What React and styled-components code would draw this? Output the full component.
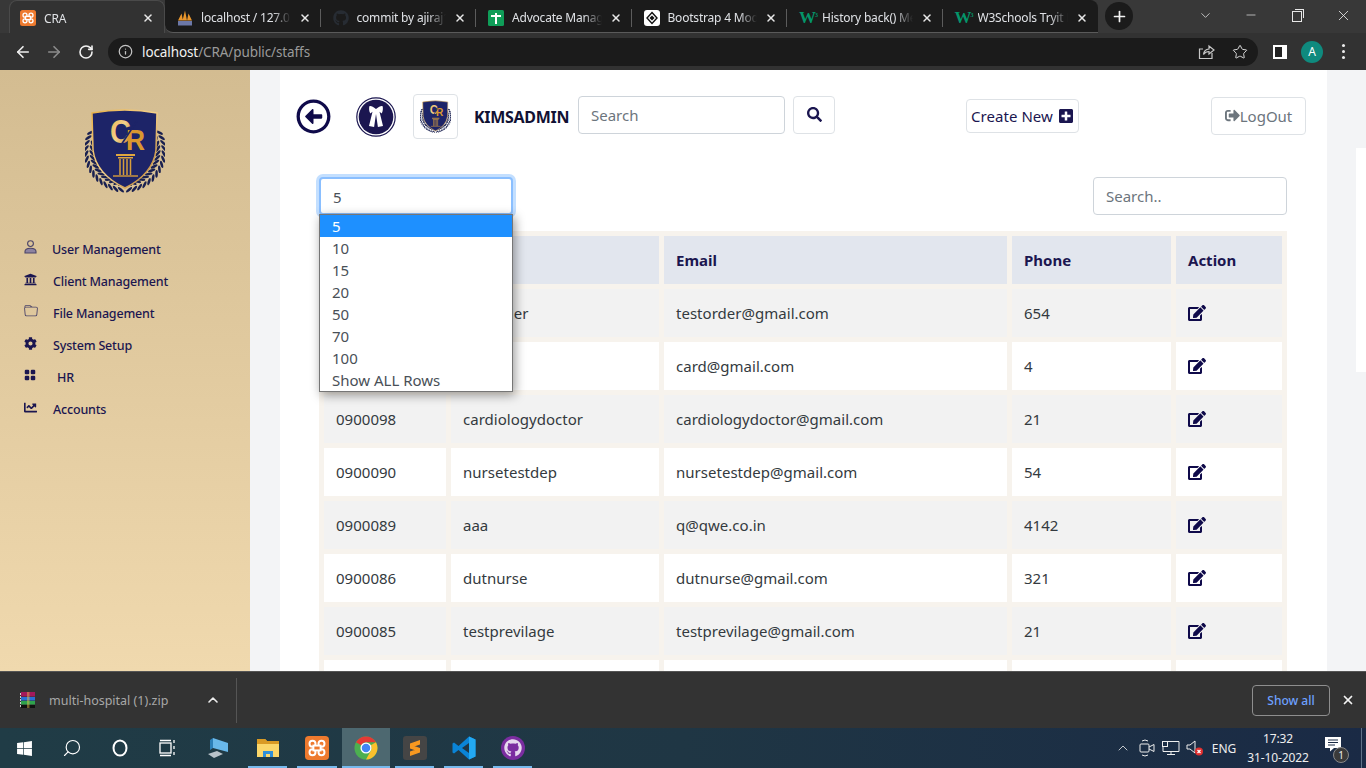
import React from 'react'
import styled, { createGlobalStyle } from 'styled-components'
import { ArrowLeft, ArrowRight, RotateCw, Info, Star, X, Plus, ChevronDown, ChevronUp, Minus, Search } from 'lucide-react'
import { FaRegArrowAltCircleLeft, FaSearch, FaPlusSquare, FaEdit, FaSignOutAlt, FaCog, FaUniversity, FaChartLine, FaWindows, FaGithub } from 'react-icons/fa'
import { BsFolder, BsGridFill } from 'react-icons/bs'

const UI_FONT = '"Noto Sans", "Open Sans", sans-serif'
const NAVY = '#1b1650'

const Global = createGlobalStyle`
  html, body { margin: 0; padding: 0; height: 100%; overflow: hidden; }
  body { font-family: ${UI_FONT}; background: #f3f4f6; }
  * { box-sizing: border-box; }
`

const Screen = styled.div`
  width: 1366px;
  height: 768px;
  display: flex;
  flex-direction: column;
  overflow: hidden;
`

/* browser tabs */
const TabStrip = styled.div`
  height: 33px;
  background: #383838;
  display: flex;
  align-items: flex-end;
  padding-left: 9px;
  flex: none;
`
const TabBox = styled.div`
  position: relative;
  width: ${p => p.$w || 155.5}px;
  height: 33px;
  display: flex;
  align-items: center;
  padding: 2px 10px 0 ${p => p.$active ? 10 : 12}px;
  gap: 8px;
  color: #dfe1e5;
  font-size: 12px;
  background: ${p => p.$active ? '#323232' : '#1b1b1b'};
  border-radius: ${p => p.$active ? '8px 8px 0 0' : p.$first ? '0 0 0 8px' : p.$last ? '0 8px 0 0' : '0'};
  border-top: 1px solid ${p => p.$active ? '#4a4a4a' : '#1b1b1b'};
  border-left: ${p => p.$active ? '1px solid #4a4a4a' : 'none'};
  border-right: ${p => p.$active ? '1px solid #4a4a4a' : 'none'};
  border-bottom: ${p => p.$active ? 'none' : '1px solid #5a5a5a'};
  &::after {
    content: '';
    display: ${p => p.$sep ? 'block' : 'none'};
    position: absolute;
    right: 0;
    top: 8px;
    height: 18px;
    width: 1px;
    background: #5c5c5c;
  }
`
const TabTitle = styled.span`
  flex: 1;
  white-space: nowrap;
  overflow: hidden;
  letter-spacing: -0.2px;
  mask-image: linear-gradient(to right, #000 80%, transparent 100%);
`
const TabClose = styled(X)`
  flex: none;
  width: 12px;
  height: 12px;
  color: #e8e8e8;
  stroke-width: 3;
`
const NewTab = styled.div`
  width: 28px;
  height: 28px;
  border-radius: 50%;
  background: #1b1b1b;
  color: #f2f2f2;
  display: flex;
  align-items: center;
  justify-content: center;
  margin: 0 0 1px 7px;
  align-self: center;
`
const WinControls = styled.div`
  margin-left: auto;
  display: flex;
  align-items: center;
  align-self: flex-start;
  height: 30px;
  color: #e8e8e8;
`
const WinButton = styled.div`
  width: 46px;
  display: flex;
  justify-content: center;
`
const RestoreGlyph = styled.div`
  position: relative;
  width: 10px;
  height: 11px;
  border: 1px solid #e8e8e8;
  margin-top: 2px;
  &::before {
    content: '';
    position: absolute;
    top: -3px;
    right: -3px;
    width: 8px;
    height: 8px;
    border-top: 1px solid #e8e8e8;
    border-right: 1px solid #e8e8e8;
  }
`

/* address bar */
const Toolbar = styled.div`
  height: 37px;
  background: #323232;
  display: flex;
  align-items: center;
  padding-left: 14px;
  color: #eee;
  flex: none;
`
const NavIcon = styled.div`
  width: ${p => p.$w || 32}px;
  display: flex;
  justify-content: ${p => p.$left ? 'flex-start' : 'center'};
  color: ${p => p.$dim ? '#8c8c8c' : '#f1f1f1'};
`
const Omnibox = styled.div`
  width: 1150px;
  height: 28px;
  margin-left: 6px;
  border-radius: 14px;
  background: #1b1b1b;
  display: flex;
  align-items: center;
  padding: 0 8px 0 10px;
  font-size: 13.5px;
  letter-spacing: -0.1px;
  color: #9a9a9a;
`
const UrlHost = styled.span`
  color: #f2f2f2;
  margin-left: 9px;
`
const OmniRight = styled.div`
  margin-left: auto;
  display: flex;
  align-items: center;
  gap: 17px;
  color: #c8c8c8;
  padding-right: 2px;
`
const PanelGlyph = styled.div`
  width: 14px;
  height: 14px;
  margin-left: 15px;
  border: 2px solid #fff;
  border-right-width: 5px;
  background: #222;
  flex: none;
`
const Avatar = styled.div`
  width: 22px;
  height: 22px;
  border-radius: 50%;
  background: #0f8a7e;
  color: #fff;
  font-size: 12px;
  margin-left: 14px;
  display: flex;
  align-items: center;
  justify-content: center;
  flex: none;
`
const Kebab = styled.div`
  margin-left: 19px;
  width: 3px;
  height: 3px;
  border-radius: 50%;
  background: #eee;
  box-shadow: 0 -6px 0 #eee, 0 6px 0 #eee;
`

/* page */
const Viewport = styled.div`
  flex: 1;
  min-height: 0;
  display: flex;
  overflow: hidden;
  background: #f3f4f6;
`
const Sidebar = styled.aside`
  width: 250px;
  flex: none;
  background: linear-gradient(180deg, #d3bc91 0%, #f0d9ae 100%);
  padding-top: 38px;
`
const LogoWrap = styled.div`
  display: flex;
  justify-content: center;
  margin-bottom: 39px;
`
const Menu = styled.nav`
  display: flex;
  flex-direction: column;
`
const MenuItem = styled.a`
  height: 32px;
  display: flex;
  align-items: center;
  padding-left: 24px;
  color: ${NAVY};
  font-size: 12.5px;
  font-weight: 500;
  letter-spacing: -0.17px;
`
const MenuIcon = styled.span`
  width: ${p => p.$w || 29}px;
  display: flex;
  align-items: center;
  margin-top: -4px;
  color: ${p => p.$soft ? '#4b4468' : NAVY};
  font-size: 13px;
  flex: none;
`
const Gutter = styled.div`
  width: 30px;
  flex: none;
`
const Main = styled.main`
  width: 1047px;
  flex: none;
  background: #fff;
  overflow: hidden;
`
const RightRail = styled.div`
  flex: 1;
  display: flex;
  justify-content: flex-end;
  align-items: flex-start;
  padding-top: 78px;
`
const RailStrip = styled.div`
  width: 10px;
  height: 224px;
  background: #fff;
`
const TopRow = styled.div`
  display: flex;
  align-items: center;
  height: 45px;
  margin-top: 24px;
  padding-left: 16px;
`
const BackIcon = styled(FaRegArrowAltCircleLeft)`
  color: #0f0a4a;
  font-size: 35px;
  flex: none;
`
const LogoBox = styled.div`
  width: 45px;
  height: 45px;
  margin-left: 17px;
  border: 1px solid #dee2e6;
  border-radius: 4px;
  display: flex;
  align-items: center;
  justify-content: center;
  flex: none;
`
const Brand = styled.div`
  margin-left: 16px;
  font-size: 16px;
  font-weight: 700;
  color: #111133;
  width: 104px;
  letter-spacing: -0.3px;
  flex: none;
`
const Field = styled.div`
  width: ${p => p.$w}px;
  height: 38px;
  margin-bottom: ${p => p.$lift || 0}px;
  border: 1px solid #ced4da;
  border-radius: 4px;
  background: #fff;
  color: #6c757d;
  font-size: 15px;
  padding-left: 12px;
  display: flex;
  align-items: center;
  flex: none;
`
const SearchBtn = styled.div`
  width: 42px;
  height: 38px;
  margin: 0 0 4px 8px;
  border: 1px solid #dee2e6;
  border-radius: 4px;
  display: flex;
  align-items: center;
  justify-content: center;
  color: ${NAVY};
  font-size: 15px;
  flex: none;
`
const CreateBtn = styled.div`
  width: 113px;
  height: 34px;
  margin: 0 0 2px 131px;
  border: 1px solid #dee2e6;
  border-radius: 4px;
  display: flex;
  align-items: center;
  justify-content: center;
  gap: 5px;
  color: ${NAVY};
  font-size: 15px;
  letter-spacing: 0.05px;
  flex: none;
`
const LogoutBtn = styled.div`
  width: 95px;
  height: 38px;
  margin: 0 0 2px 132px;
  border: 1px solid #dee2e6;
  border-radius: 4px;
  display: flex;
  align-items: center;
  justify-content: center;
  color: #6c757d;
  font-size: 15px;
  flex: none;
`
const FilterRow = styled.div`
  display: flex;
  justify-content: space-between;
  margin-top: 38px;
  padding: 0 40px 0 39px;
  height: 38px;
`
const SelectWrap = styled.div`
  position: relative;
  width: 194px;
`
const SelectBox = styled.div`
  height: 38px;
  border: 2px solid #8abfff;
  border-radius: 4px;
  box-shadow: 0 0 0 3px #c3dfff;
  background: #fff;
  color: #495057;
  font-size: 15px;
  padding: 1px 0 0 12px;
  display: flex;
  align-items: center;
`
const OptionList = styled.div`
  position: absolute;
  z-index: 5;
  top: 37px;
  left: 0;
  width: 194px;
  background: #fff;
  border: 1px solid #767676;
  box-shadow: 2px 3px 10px rgba(0, 0, 0, 0.4);
`
const Option = styled.div`
  height: 22px;
  line-height: 23px;
  padding-left: 12px;
  font-size: 15px;
  color: ${p => p.$on ? '#fff' : '#495057'};
  background: ${p => p.$on ? '#1e90ff' : '#fff'};
`
const Table = styled.table`
  margin: 16px 0 0 39px;
  width: 968px;
  table-layout: fixed;
  border-collapse: separate;
  border-spacing: 5px;
  background: #f7f3ed;
`
const HeadCell = styled.th`
  height: 48px;
  padding: 0 12px;
  background: #e2e6ee;
  color: ${NAVY};
  font-size: 15px;
  font-weight: 700;
  text-align: left;
`
const Cell = styled.td`
  height: 48px;
  padding: 0 12px;
  color: #343a40;
  font-size: 15px;
  letter-spacing: 0.02px;
  background: ${p => p.$odd ? '#f2f2f2' : '#fff'};
  white-space: nowrap;
`
const EditIcon = styled(FaEdit)`
  color: #0f0a4a;
  font-size: 18px;
  display: block;
`

/* download shelf */
const Shelf = styled.div`
  height: 57px;
  flex: none;
  background: #333;
  border-top: 1px solid #555;
  display: flex;
  align-items: center;
  padding-left: 20px;
  color: #a8a8a8;
  font-size: 12.5px;
`
const ShelfName = styled.span`
  margin-left: 13px;
  width: 156px;
`
const ShelfDivider = styled.div`
  width: 1px;
  height: 45px;
  background: #555;
  margin-left: 15px;
`
const ShowAll = styled.div`
  margin-left: auto;
  width: 78px;
  height: 31px;
  border: 1px solid #8e8e8e;
  border-radius: 4px;
  color: #6ea1ff;
  font-size: 12px;
  font-weight: 500;
  display: flex;
  align-items: center;
  justify-content: center;
`
const ShelfClose = styled(X)`
  width: 14px;
  height: 14px;
  margin: 0 11px 0 11px;
  color: #f4f4f4;
  stroke-width: 3;
`

/* windows taskbar */
const Taskbar = styled.div`
  height: 40px;
  flex: none;
  background: linear-gradient(90deg, #203c46 0%, #1f3644 50%, #1a2a45 100%);
  display: flex;
  align-items: stretch;
  color: #fff;
`
const TaskSlot = styled.div`
  position: relative;
  width: ${p => p.$w || 48}px;
  display: flex;
  align-items: center;
  justify-content: center;
  background: ${p => p.$active ? '#4d6870' : 'transparent'};
  flex: none;
  &::after {
    content: '';
    display: ${p => p.$open ? 'block' : 'none'};
    position: absolute;
    left: ${p => p.$active ? 0 : 5}px;
    right: ${p => p.$active ? 0 : 5}px;
    bottom: 0;
    height: 2px;
    background: #76b9ed;
  }
`
const Tray = styled.div`
  margin-left: auto;
  display: flex;
  align-items: center;
  font-size: 12px;
  color: #eee;
`
const TrayItem = styled.div`
  width: ${p => p.$w}px;
  display: flex;
  justify-content: center;
  align-items: center;
  flex: none;
`
const Clock = styled.div`
  width: 74px;
  text-align: center;
  line-height: 19px;
  font-size: 12px;
  letter-spacing: -0.1px;
  flex: none;
`
const Notify = styled.div`
  position: relative;
  width: 36px;
  height: 100%;
  display: flex;
  align-items: center;
  justify-content: center;
  padding-bottom: 8px;
  flex: none;
`
const NotifyBadge = styled.div`
  position: absolute;
  right: 2px;
  bottom: 5px;
  width: 16px;
  height: 16px;
  border-radius: 50%;
  background: #3a3a3a;
  border: 1px solid #888;
  font-size: 10px;
  display: flex;
  align-items: center;
  justify-content: center;
`
const DesktopEdge = styled.div`
  width: 15px;
  height: 100%;
  flex: none;
  &::after {
    content: '';
    display: block;
    margin-left: 10px;
    width: 1px;
    height: 100%;
    background: #5f7288;
  }
`
const GithubDisc = styled.div`
  width: 24px;
  height: 24px;
  border-radius: 50%;
  background: #7b2da0;
  display: flex;
  align-items: center;
  justify-content: center;
  color: #e6d8ee;
  font-size: 18px;
`

let logoId = 0
function Logo({ size = 80 }) {
  const gid = 'gold' + (logoId++)
  const leaves = []
  for (let i = 0; i < 15; i++) {
    const phi = (-28 + i * 8) * Math.PI / 180
    const deg = -28 + i * 8
    ;[33, 39].forEach((R, k) => {
      const lx = 40 - R * Math.cos(phi)
      const ly = 43 + R * Math.sin(phi)
      const tilt = 90 - deg + (k ? 35 : -35)
      const id = i + '-' + k
      leaves.push(<ellipse key={'l' + id} cx={lx} cy={ly} rx="3.8" ry="1.3" fill="#1a2150" transform={`rotate(${tilt} ${lx} ${ly})`} />)
      leaves.push(<ellipse key={'r' + id} cx={80 - lx} cy={ly} rx="3.8" ry="1.3" fill="#1a2150" transform={`rotate(${-tilt} ${80 - lx} ${ly})`} />)
    })
  }
  return (
    <svg width={size} height={size * 86 / 80} viewBox="0 0 80 86">
      <defs>
        <linearGradient id={gid} x1="0" y1="0" x2="1" y2="1">
          <stop offset="0" stopColor="#e8b24a" />
          <stop offset="0.5" stopColor="#f4d08a" />
          <stop offset="1" stopColor="#b97a22" />
        </linearGradient>
      </defs>
      {leaves}
      <path d="M7 5 Q40 -1 72 5 L71 42 Q68 66 40 80 Q11 66 8 42 Z" fill="#1d2468" stroke={`url(#${gid})`} strokeWidth="1.5" />
      <text x="25" y="35" fontFamily="Liberation Sans, sans-serif" fontWeight="700" fontSize="34" textLength="21" lengthAdjust="spacingAndGlyphs" fill={`url(#${gid})`}>C</text>
      <text x="41" y="42" fontFamily="Liberation Sans, sans-serif" fontWeight="700" fontSize="30" textLength="19" lengthAdjust="spacingAndGlyphs" fill="#d9982f">R</text>
      <path d="M30 46 L52 13" stroke="#1d2468" strokeWidth="1.6" />
      <rect x="31" y="46" width="19" height="2" fill="#e0a63f" />
      <rect x="33" y="49" width="15" height="1.5" fill="#e0a63f" />
      <path d="M35 51 V67 M38.5 51 V67 M42 51 V67 M45.5 51 V67" stroke="#d89e3b" strokeWidth="1.5" />
      <path d="M28 68 H53" stroke="#d89e3b" strokeWidth="1.4" />
    </svg>
  )
}

const AdvocateIcon = () => (
  <svg width="40" height="40" viewBox="0 0 40 40" style={{ flexShrink: 0, marginLeft: 25 }}>
    <circle cx="20" cy="20" r="19.2" fill="#fff" stroke={NAVY} strokeWidth="1.2" />
    <circle cx="20" cy="20" r="17.3" fill={NAVY} />
    <path d="M20 12 C17 9.5 15 8.5 13.5 9 C12.7 11 13.1 14.5 14.3 16.5 L16.5 14.8 L13 29 L18.1 30 L20 17 L21.9 30 L27 29 L23.5 14.8 L25.7 16.5 C26.9 14.5 27.3 11 26.5 9 C25 8.5 23 9.5 20 12 Z" fill="#fff" />
  </svg>
)

const XamppIcon = ({ size = 16 }) => (
  <svg width={size} height={size} viewBox="0 0 16 16" style={{ flexShrink: 0 }}>
    <rect width="16" height="16" rx="2.5" fill="#ee7a2e" />
    <g fill="none" stroke="#fff" strokeWidth="1.3">
      <circle cx="5" cy="5.2" r="2" />
      <circle cx="11" cy="5.2" r="2" />
      <circle cx="5" cy="10.8" r="2" />
      <circle cx="11" cy="10.8" r="2" />
      <rect x="5.6" y="6.4" width="4.8" height="3.2" fill="#ee7a2e" />
    </g>
  </svg>
)
const PmaIcon = () => (
  <svg width="16" height="16" viewBox="0 0 16 16" style={{ flexShrink: 0 }}>
    <path d="M1 10.5 L4.5 3.5 L6 10.5 Z M5.5 10.5 L8 0.5 L10 10.5 Z M10 10.5 L11.5 3.5 L15 10.5 Z" fill="#e9962c" />
    <rect x="1" y="11" width="14" height="4.5" fill="#6c78a8" />
  </svg>
)
const SheetIcon = () => (
  <svg width="16" height="16" viewBox="0 0 16 16" style={{ flexShrink: 0 }}>
    <rect width="16" height="16" rx="1.5" fill="#0f9d58" />
    <path d="M3 6 H13 M8 3 V14" stroke="#fff" strokeWidth="2" />
  </svg>
)
const BootIcon = () => (
  <svg width="16" height="16" viewBox="0 0 16 16" style={{ flexShrink: 0 }}>
    <rect width="16" height="16" rx="3" fill="#fff" />
    <path d="M8 2.5 L13 8 L8 13.5 L3 8 Z" fill="none" stroke="#111" strokeWidth="1.4" />
    <path d="M8 5.5 L10.5 8 L8 10.5 L5.5 8 Z" fill="#111" />
  </svg>
)
const W3Mark = styled.span`
  flex: none;
  width: 15px;
  color: #04956a;
  font-family: "Liberation Serif", serif;
  font-weight: 700;
  font-size: 17px;
  line-height: 16px;
  letter-spacing: -1px;
  & > sup { font-size: 6px; vertical-align: 6px; line-height: 0; }
`
const W3Icon = () => <W3Mark>W<sup>3</sup></W3Mark>

const ShareIcon = () => (
  <svg width="17" height="17" viewBox="0 0 17 17" fill="none" stroke="#c8c8c8" strokeWidth="1.2">
    <path d="M14 10 V15.5 H1.5 V6 H5" />
    <path d="M5.5 11.5 Q6 6.5 11 6 V3 L16 7 L11 11 V8.5 Q7.5 8.5 5.5 11.5 Z" />
  </svg>
)
const RarIcon = () => (
  <svg width="16" height="16" viewBox="0 0 16 16" style={{ flexShrink: 0 }}>
    <rect x="1" y="0" width="14" height="4.5" fill="#a3195b" />
    <rect x="1" y="5" width="14" height="3.5" fill="#2a6fd6" />
    <rect x="1" y="9" width="14" height="3.5" fill="#2ea24c" />
    <rect x="1" y="13" width="14" height="3" fill="#111" />
    <path d="M1 2 H0 M1 5 H0 M1 8 H0 M1 11 H0 M1 14 H0" stroke="#fff" strokeWidth="1.4" />
    <rect x="7" y="0" width="2.5" height="16" fill="#e8c34a" opacity="0.45" />
  </svg>
)
const PersonIcon = () => (
  <svg width="13" height="14" viewBox="0 0 13 14" fill="none" stroke="#4b4468" strokeWidth="1.1">
    <circle cx="6.5" cy="3.6" r="2.9" />
    <path d="M1 13 V11.5 Q1 8.2 6.5 8.2 Q12 8.2 12 11.5 V13 Z" fill="#8d83a0" />
  </svg>
)
const SearchGlyph = () => <Search size={20} strokeWidth={1.4} color="#fff" style={{ transform: 'scaleX(-1)' }} />
const TaskViewIcon = () => (
  <svg width="18" height="18" viewBox="0 0 18 18" fill="none" stroke="#fff" strokeWidth="1.3">
    <rect x="1" y="4" width="11" height="10" />
    <path d="M1 1.5 H12 M1 16.5 H12 M15 1 V4 M15 7 V10 M15 13 V16" />
  </svg>
)
const ThisPcIcon = () => (
  <svg width="22" height="22" viewBox="0 0 22 22">
    <path d="M6 1 L21 6 V15 L6 11 Z" fill="#69b8ea" />
    <path d="M6 1 L3 3 V13 L6 11 Z" fill="#2c7fb8" />
    <path d="M1 17 L10 14 L16 17 L7 21 Z" fill="#b9c2c9" />
  </svg>
)
const FolderIcon = () => (
  <svg width="22" height="18" viewBox="0 0 22 18">
    <path d="M0 0 H8 L10 2 H22 V18 H0 Z" fill="#f2c14e" />
    <path d="M0 0 H8 L10 2 H22 V5 H0 Z" fill="#d99a24" />
    <path d="M0 5 H22 V18 H0 Z" fill="#fbd76a" />
    <path d="M6 18 V12 H16 V18 H13 V15 H9 V18 Z" fill="#2f8fd8" />
  </svg>
)
const ChromeIcon = () => (
  <svg width="24" height="24" viewBox="0 0 26 26">
    <circle cx="13" cy="13" r="12.5" fill="#4caf50" />
    <path d="M13 0.5 A12.5 12.5 0 0 1 23.8 6.8 H13 A6 6 0 0 0 7.8 10 L2.2 6.8 A12.5 12.5 0 0 1 13 0.5 Z" fill="#e53935" />
    <path d="M23.8 6.8 A12.5 12.5 0 0 1 13 25.5 L18.2 16 A6 6 0 0 0 18.2 10 Z" fill="#fbc02d" />
    <circle cx="13" cy="13" r="6" fill="#fff" />
    <circle cx="13" cy="13" r="4.6" fill="#4285f4" />
  </svg>
)
const SublimeIcon = () => (
  <svg width="24" height="24" viewBox="0 0 24 24">
    <rect width="24" height="24" rx="3" fill="#454545" />
    <path d="M7 7.5 L17 4 V8.5 L7 12 Z M7 15.5 L17 12 V16.5 L7 20 Z M7 8.5 L17 12 V16 L7 12.5 Z" fill="#f89820" />
  </svg>
)
const VsCodeIcon = () => (
  <svg width="24" height="24" viewBox="0 0 24 24">
    <path d="M17 0.5 L23.5 3.5 V20.5 L17 23.5 L6.5 14 L2 17.5 L0.5 16.5 V7.5 L2 6.5 L6.5 10 Z" fill="#0a84d6" />
    <path d="M17 7 L10 12 L17 17 Z" fill="#1f3644" />
    <path d="M17 0.5 L23.5 3.5 V20.5 L17 23.5 Z" fill="#23a9f2" />
  </svg>
)
const MeetIcon = () => (
  <svg width="16" height="20" viewBox="0 0 16 20" fill="none" stroke="#eee" strokeWidth="1">
    <rect x="1" y="6" width="9" height="8" rx="1" />
    <path d="M10 9 L15 6.5 V13.5 L10 11" />
    <path d="M3 3 Q6 1 9 3 M3 17 Q6 19 9 17" />
  </svg>
)
const NetworkIcon = () => (
  <svg width="18" height="16" viewBox="0 0 18 16" fill="none" stroke="#eee" strokeWidth="1">
    <path d="M5 1.5 H17 V11.5 H1 V7" />
    <path d="M9 11.5 V14.5 M5 14.5 H13" />
    <rect x="0.5" y="1.5" width="5" height="5" />
  </svg>
)
const VolumeIcon = () => (
  <svg width="18" height="18" viewBox="0 0 18 18">
    <path d="M1 6 H4 L9 2 V14 L4 10 H1 Z" fill="none" stroke="#eee" />
    <circle cx="13" cy="12.5" r="4" fill="#e02f2f" />
    <path d="M11.5 11 L14.5 14 M14.5 11 L11.5 14" stroke="#fff" strokeWidth="1.2" />
  </svg>
)
const ChatIcon = () => (
  <svg width="16" height="15" viewBox="0 0 16 15">
    <path d="M0 0 H16 V11 H9 L5 14.5 V11 H0 Z" fill="#fff" />
    <path d="M3 3 H13 M3 5.5 H13 M3 8 H10" stroke="#1a2a45" />
  </svg>
)

const tabs = [
  { title: 'localhost / 127.0.0.1', icon: <PmaIcon />, sep: true, first: true },
  { title: 'commit by ajiraj1', icon: <FaGithub size={16} color="#272c33" style={{ flexShrink: 0 }} />, sep: true },
  { title: 'Advocate Management', icon: <SheetIcon />, sep: true },
  { title: 'Bootstrap 4 Modals', icon: <BootIcon />, sep: true },
  { title: 'History back() Method', icon: <W3Icon />, sep: true },
  { title: 'W3Schools Tryit Editor', icon: <W3Icon />, last: true },
]

const menu = [
  { label: 'User Management', icon: <PersonIcon />, w: 28 },
  { label: 'Client Management', icon: <FaUniversity /> },
  { label: 'File Management', icon: <BsFolder size={14} />, soft: true },
  { label: 'System Setup', icon: <FaCog /> },
  { label: 'HR', icon: <BsGridFill size={12} />, w: 33 },
  { label: 'Accounts', icon: <FaChartLine /> },
]

const rows = [
  ['0900099', 'testorder', 'testorder@gmail.com', '654'],
  ['0900095', 'card', 'card@gmail.com', '4'],
  ['0900098', 'cardiologydoctor', 'cardiologydoctor@gmail.com', '21'],
  ['0900090', 'nursetestdep', 'nursetestdep@gmail.com', '54'],
  ['0900089', 'aaa', 'q@qwe.co.in', '4142'],
  ['0900086', 'dutnurse', 'dutnurse@gmail.com', '321'],
  ['0900085', 'testprevilage', 'testprevilage@gmail.com', '21'],
  ['0900084', 'test', 'test@gmail.com', '12'],
]

const pageSizes = ['5', '10', '15', '20', '50', '70', '100', 'Show ALL Rows']

export default function App() {
  return (
    <Screen>
      <Global />
      <TabStrip>
        <TabBox $active $w={156}>
          <XamppIcon />
          <TabTitle>CRA</TabTitle>
          <TabClose />
        </TabBox>
        {tabs.map(t => (
          <TabBox key={t.title} $sep={t.sep} $first={t.first} $last={t.last}>
            {t.icon}
            <TabTitle>{t.title}</TabTitle>
            <TabClose />
          </TabBox>
        ))}
        <NewTab><Plus size={17} strokeWidth={2.4} /></NewTab>
        <WinControls>
          <WinButton><ChevronDown size={15} strokeWidth={1.2} /></WinButton>
          <WinButton><Minus size={14} strokeWidth={1.2} /></WinButton>
          <WinButton><RestoreGlyph /></WinButton>
          <WinButton><X size={17} strokeWidth={1.2} /></WinButton>
        </WinControls>
      </TabStrip>

      <Toolbar>
        <NavIcon $left $w={24}><ArrowLeft size={18} strokeWidth={2.2} /></NavIcon>
        <NavIcon $dim><ArrowRight size={18} strokeWidth={2.2} /></NavIcon>
        <NavIcon><RotateCw size={16} strokeWidth={2.4} /></NavIcon>
        <Omnibox>
          <Info size={15} color="#c4c4c4" />
          <UrlHost>localhost</UrlHost>/CRA/public/staffs
          <OmniRight>
            <ShareIcon />
            <Star size={16} strokeWidth={1.5} color="#d8d8d8" />
          </OmniRight>
        </Omnibox>
        <PanelGlyph />
        <Avatar>A</Avatar>
        <Kebab />
      </Toolbar>

      <Viewport>
        <Sidebar>
          <LogoWrap><Logo /></LogoWrap>
          <Menu>
            {menu.map(m => (
              <MenuItem key={m.label}>
                <MenuIcon $w={m.w} $soft={m.soft}>{m.icon}</MenuIcon>
                {m.label}
              </MenuItem>
            ))}
          </Menu>
        </Sidebar>
        <Gutter />
        <Main>
          <TopRow>
            <BackIcon />
            <AdvocateIcon />
            <LogoBox><Logo size={31} /></LogoBox>
            <Brand>KIMSADMIN</Brand>
            <Field $w={207} $lift={4}>Search</Field>
            <SearchBtn><FaSearch /></SearchBtn>
            <CreateBtn>Create New <FaPlusSquare size={16} /></CreateBtn>
            <LogoutBtn><FaSignOutAlt size={15} />LogOut</LogoutBtn>
          </TopRow>
          <FilterRow>
            <SelectWrap>
              <SelectBox>5</SelectBox>
              <OptionList>
                {pageSizes.map((s, i) => <Option key={s} $on={i === 0}>{s}</Option>)}
              </OptionList>
            </SelectWrap>
            <Field $w={194}>Search..</Field>
          </FilterRow>
          <Table>
            <colgroup>
              <col width="122" />
              <col width="208" />
              <col width="343" />
              <col width="159" />
              <col width="106" />
            </colgroup>
            <thead>
              <tr>
                <HeadCell>ID</HeadCell>
                <HeadCell>Name</HeadCell>
                <HeadCell>Email</HeadCell>
                <HeadCell>Phone</HeadCell>
                <HeadCell>Action</HeadCell>
              </tr>
            </thead>
            <tbody>
              {rows.map((r, i) => (
                <tr key={r[0]}>
                  {r.map((c, j) => <Cell key={j} $odd={i % 2 === 0}>{c}</Cell>)}
                  <Cell $odd={i % 2 === 0}><EditIcon /></Cell>
                </tr>
              ))}
            </tbody>
          </Table>
        </Main>
        <RightRail><RailStrip /></RightRail>
      </Viewport>

      <Shelf>
        <RarIcon />
        <ShelfName>multi-hospital (1).zip</ShelfName>
        <ChevronUp size={16} strokeWidth={2.4} color="#eee" />
        <ShelfDivider />
        <ShowAll>Show all</ShowAll>
        <ShelfClose />
      </Shelf>

      <Taskbar>
        <TaskSlot><FaWindows size={17} /></TaskSlot>
        <TaskSlot><SearchGlyph /></TaskSlot>
        <TaskSlot>
          <svg width="16" height="18" viewBox="0 0 16 18"><ellipse cx="8" cy="9" rx="6.5" ry="7.5" fill="none" stroke="#fff" strokeWidth="2" /></svg>
        </TaskSlot>
        <TaskSlot><TaskViewIcon /></TaskSlot>
        <TaskSlot $w={51}><ThisPcIcon /></TaskSlot>
        <TaskSlot $open $w={49}><FolderIcon /></TaskSlot>
        <TaskSlot $open $w={50}><XamppIcon size={24} /></TaskSlot>
        <TaskSlot $open $active><ChromeIcon /></TaskSlot>
        <TaskSlot $open $w={49}><SublimeIcon /></TaskSlot>
        <TaskSlot $open $w={49}><VsCodeIcon /></TaskSlot>
        <TaskSlot $open $w={49}><GithubDisc><FaGithub /></GithubDisc></TaskSlot>
        <Tray>
          <TrayItem $w={24}><ChevronUp size={16} strokeWidth={1.2} /></TrayItem>
          <TrayItem $w={24}><MeetIcon /></TrayItem>
          <TrayItem $w={24}><NetworkIcon /></TrayItem>
          <TrayItem $w={24}><VolumeIcon /></TrayItem>
          <TrayItem $w={34}>ENG</TrayItem>
          <Clock>17:32<br />31-10-2022</Clock>
          <Notify>
            <ChatIcon />
            <NotifyBadge>1</NotifyBadge>
          </Notify>
          <DesktopEdge />
        </Tray>
      </Taskbar>
    </Screen>
  )
}
